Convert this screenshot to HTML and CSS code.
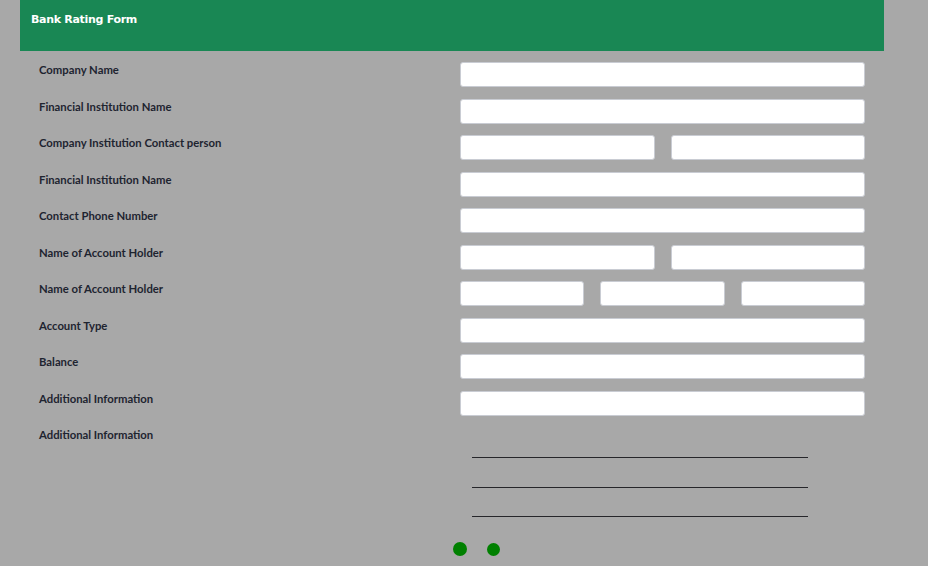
FILE: index.html
```html
<!DOCTYPE html>
<html>
<head>
<meta charset="utf-8">
<link rel="stylesheet" href="styles.css">
</head>
<body>
<div class="page">
  <div class="header"><h1 class="title">Bank Rating Form</h1></div>
  <div class="form">
    <div class="row"><label class="label">Company Name</label><div class="fields"><input class="input" type="text"></div></div>
    <div class="row"><label class="label">Financial Institution Name</label><div class="fields"><input class="input" type="text"></div></div>
    <div class="row"><label class="label">Company Institution Contact person</label><div class="fields two"><input class="input" type="text"><input class="input" type="text"></div></div>
    <div class="row"><label class="label">Financial Institution Name</label><div class="fields"><input class="input" type="text"></div></div>
    <div class="row"><label class="label">Contact Phone Number</label><div class="fields"><input class="input" type="text"></div></div>
    <div class="row"><label class="label">Name of Account Holder</label><div class="fields two"><input class="input" type="text"><input class="input" type="text"></div></div>
    <div class="row"><label class="label">Name of Account Holder</label><div class="fields three"><input class="input" type="text"><input class="input" type="text"><input class="input" type="text"></div></div>
    <div class="row"><label class="label">Account Type</label><div class="fields"><input class="input" type="text"></div></div>
    <div class="row"><label class="label">Balance</label><div class="fields"><input class="input" type="text"></div></div>
    <div class="row"><label class="label">Additional Information</label><div class="fields"><input class="input" type="text"></div></div>
    <div class="row last"><label class="label">Additional Information</label>
      <div class="lines">
        <div class="line"></div>
        <div class="line"></div>
        <div class="line"></div>
      </div>
    </div>
    <div class="dots"><span class="dot big"></span><span class="dot"></span></div>
  </div>
</div>
</body>
</html>
```
FILE: styles.css
```css
html, body {
  margin: 0;
  padding: 0;
  background: #a8a8a8;
  font-family: "Lato", "Noto Sans", sans-serif;
}
.page {
  margin-left: 20px;
  width: 864px;
}
.header {
  background: #198754;
  height: 51px;
  padding: 0 11px;
  box-sizing: border-box;
}
.title {
  margin: 0;
  padding-top: 12px;
  font-family: "DejaVu Sans", sans-serif;
  font-size: 11px;
  font-weight: bold;
  color: #fff;
  line-height: 16px;
  letter-spacing: -0.3px;
}
.form {
  padding: 11px 19px 0 19px;
  display: flex;
  flex-direction: column;
  gap: 11.56px;
}
.row {
  display: flex;
  align-items: flex-start;
}
.label {
  width: 421px;
  flex: none;
  font-size: 11.3px;
  font-weight: 700;
  color: #1e2430;
  line-height: 15px;
}
.fields {
  width: 405px;
  display: grid;
  grid-template-columns: 1fr;
  gap: 16px;
}
.fields.two { grid-template-columns: 1fr 1fr; }
.fields.three { grid-template-columns: 1fr 1fr 1fr; }
.input {
  display: block;
  width: 100%;
  height: 25px;
  box-sizing: border-box;
  border: 1px solid #c9ccd3;
  border-radius: 3px;
  background: #fff;
  margin: 0;
  padding: 0 6px;
}
.lines {
  padding-top: 30px;
  padding-left: 12px;
  display: flex;
  flex-direction: column;
  gap: 28.5px;
}
.line {
  width: 336px;
  height: 0;
  border-bottom: 1px solid #26262a;
}
.dots {
  display: flex;
  align-items: center;
  gap: 20px;
  padding-left: 414px;
  margin-top: 13px;
}
.dot {
  width: 13px;
  height: 13px;
  border-radius: 50%;
  background: #008000;
}
.dot.big {
  width: 14px;
  height: 14px;
}
```
